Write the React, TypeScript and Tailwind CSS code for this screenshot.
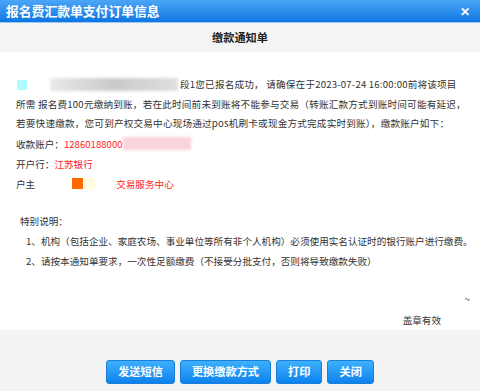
import React from "react";

const font = { fontFamily: '"Noto Sans CJK SC", "Noto Sans", sans-serif' };

function Btn({ children }: { children: React.ReactNode }) {
  return (
    <button className="h-[24px] px-[11px] rounded-[3px] border border-[#1a7fd8] bg-gradient-to-b from-[#3cb0fb] to-[#0a82ee] text-white text-[11.2px] font-bold leading-none whitespace-nowrap">
      {children}
    </button>
  );
}

export default function App() {
  return (
    <div className="w-[480px] h-[391px] flex flex-col bg-white overflow-hidden text-[#333]" style={font}>
      {/* title bar */}
      <div className="h-[23px] flex items-center justify-between pl-[6px] pr-[10px] bg-gradient-to-b from-[#4aa6f6] to-[#0a76e2] border-b border-[#9ccaf0] shrink-0">
        <span className="text-white text-[12.8px] font-bold leading-none">报名费汇款单支付订单信息</span>
        <span className="text-white text-[12px] font-black leading-none">✕</span>
      </div>
      {/* sub header */}
      <div className="h-[29px] flex items-center justify-center bg-[#f4f4f4] shrink-0">
        <span className="text-[11.2px] font-bold text-[#222] leading-none">缴款通知单</span>
      </div>
      {/* body */}
      <div className="flex-1 flex flex-col pt-[23px] pl-[16px] text-[9.6px]">
        <div className="leading-[19.5px] whitespace-nowrap tracking-[0.2px]">
          <div className="flex items-center">
            <span className="inline-block w-[10px] h-[10px] bg-[#aefcfc] ml-[1px]" />
            <span className="inline-block ml-[23px] w-[128px] h-[13px] bg-gradient-to-r from-[#e4e4e4] via-[#bdbdbd] to-[#d8d8d8] blur-[1.5px] opacity-80" />
            <span className="ml-[2px]">段1您已报名成功， 请确保在于2023-07-24 16:00:00前将该项目</span>
          </div>
          <div>所需 报名费100元缴纳到账，若在此时间前未到账将不能参与交易（转账汇款方式到账时间可能有延迟，</div>
          <div>若要快速缴款，您可到产权交易中心现场通过pos机刷卡或现金方式完成实时到账），缴款账户如下：</div>
        </div>
        <div className="leading-[20px] whitespace-nowrap">
          <div className="flex items-center">
            <span>收款账户：</span>
            <span className="text-[#f22]">12860188000</span>
            <span className="inline-block w-[68px] h-[13px] bg-[#fbd3da] blur-[1.5px]" />
          </div>
          <div>
            <span>开户行：</span>
            <span className="text-[#f22]">江苏银行</span>
          </div>
          <div className="flex items-center">
            <span>户主</span>
            <span className="inline-block ml-[37px] w-[11px] h-[11px] bg-[#ff6a00]" />
            <span className="inline-block w-[12px] h-[11px] bg-[#fffbe2]" />
            <span className="ml-[21px] text-[#f22]">交易服务中心</span>
          </div>
        </div>
        <div className="mt-[17px] pl-[4px] leading-[20px] whitespace-nowrap">
          <div>特别说明：</div>
          <div className="pl-[6px]">1、机构（包括企业、家庭农场、事业单位等所有非个人机构）必须使用实名认证时的银行账户进行缴费。</div>
          <div className="pl-[6px]">2、请按本通知单要求，一次性足额缴费（不接受分批支付，否则将导致缴款失败）</div>
        </div>
        <div className="flex-1" />
        <div className="flex justify-end pr-[10px]">
          <span className="text-[10px] leading-none text-[#555]">~</span>
        </div>
        <div className="flex justify-end pr-[39px] pt-[10px] pb-[4px]">
          <span className="text-[9.6px] leading-[12px]">盖章有效</span>
        </div>
      </div>
      {/* footer */}
      <div className="h-[61px] bg-[#f3f3f3] flex justify-center items-start pt-[30px] gap-[5px] shrink-0">
        <Btn>发送短信</Btn>
        <Btn>更换缴款方式</Btn>
        <Btn>打印</Btn>
        <Btn>关闭</Btn>
      </div>
    </div>
  );
}
